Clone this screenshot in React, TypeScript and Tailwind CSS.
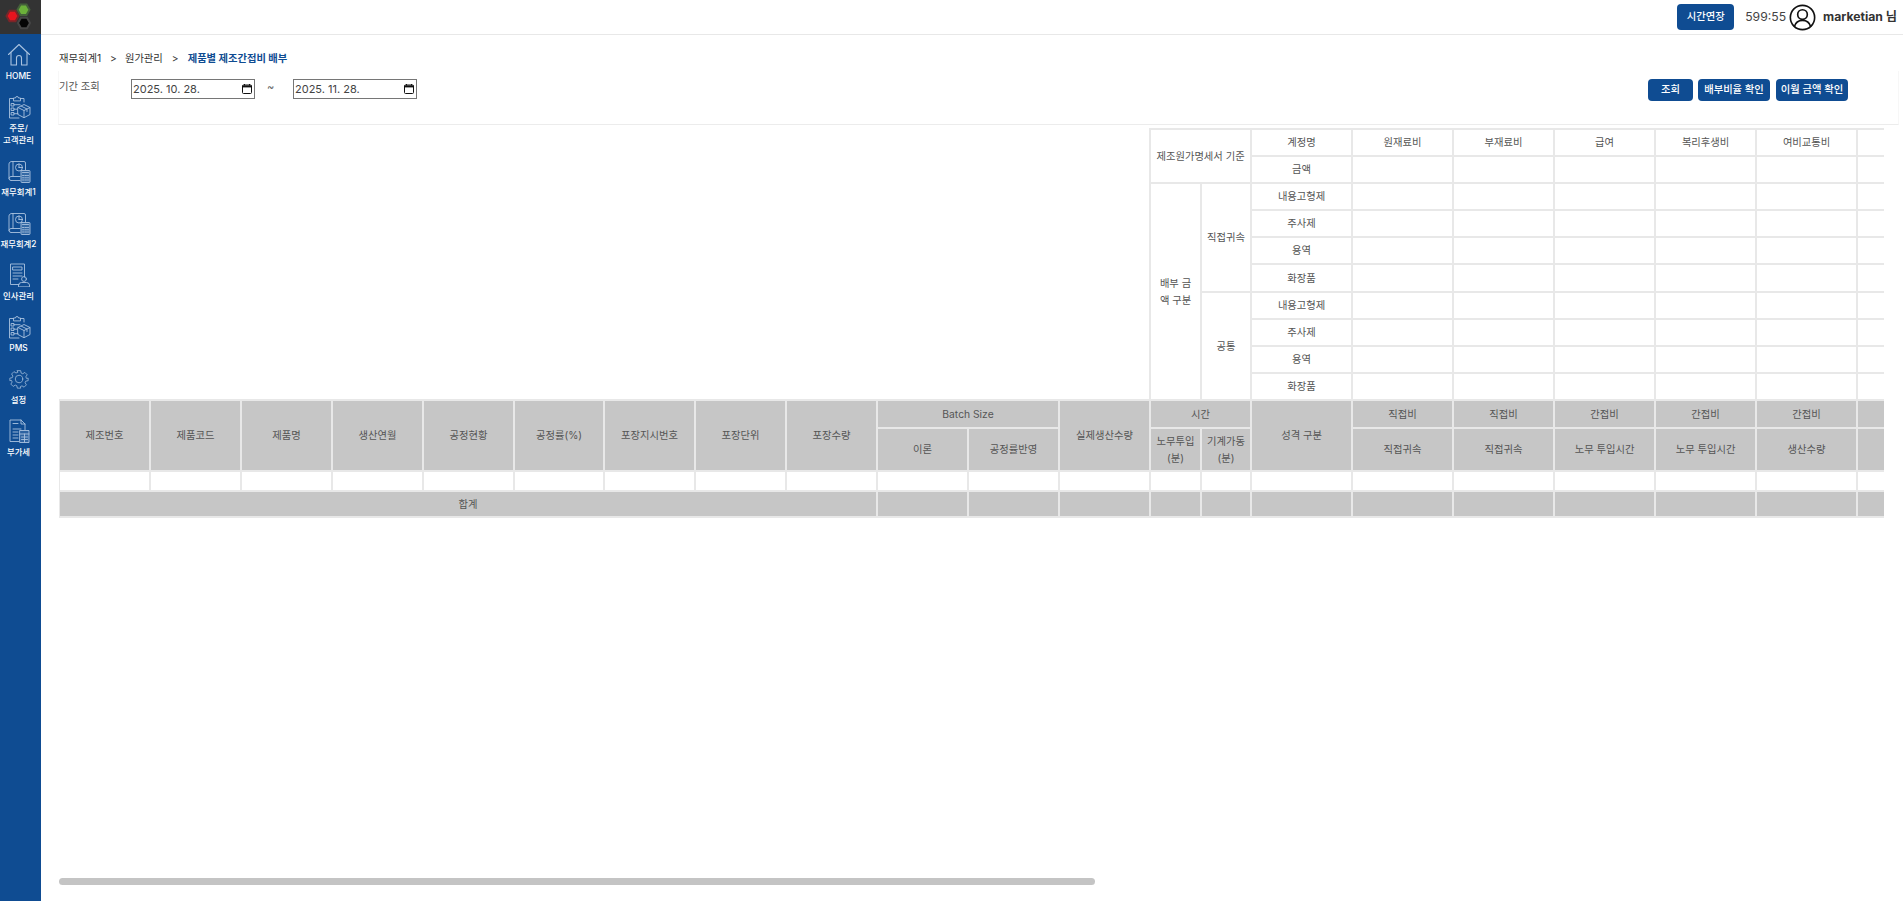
import React from "react";

const FONT = "[font-family:Inter,'Noto_Sans_CJK_KR',sans-serif]";

const Stroke = ({ children, vb = "0 0 24 24", cls = "w-[24px] h-[24px]" }: { children: React.ReactNode; vb?: string; cls?: string }) => (
  <svg viewBox={vb} className={cls} fill="none" stroke="#a9c2df" strokeWidth="0.9" strokeLinejoin="round" strokeLinecap="round">
    {children}
  </svg>
);

const HomeIcon = () => (
  <Stroke>
    <path d="M1.5 11.5 12 1.5l10.5 10" strokeWidth="1.1" />
    <path d="M4 9.5V22h5.5v-7a2.5 2.5 0 0 1 5 0v7H20V9.5" strokeWidth="1.1" />
  </Stroke>
);
const OrderIcon = () => (
  <Stroke>
    <path d="M17 7V3.5h-3.5M6.5 3.5H2.5V23H12" />
    <path d="M6.5 5.5V3h2a1.5 1.5 0 0 1 3 0h2v2.5z" />
    <path d="M4.5 8.5h2.5v2.5H4.5zM4.5 13h2.5v2.5H4.5zM4.5 17.5h2.5V20H4.5zM7 9.7h6M7 14.2h3M7 18.7h4" />
    <path d="m11 12.5 6-3 6 3v7l-6 3.2-6-3.2zM11 12.5l6 3 6-3M17 15.5v7M14 11l6 3v2.5" />
  </Stroke>
);
const BookIcon = () => (
  <Stroke>
    <path d="M5 2.5h12a1.5 1.5 0 0 1 1.5 1.5v7M4 21.5A2 2 0 0 1 2 19.5V5a2.5 2.5 0 0 1 3-2.5M2 19.5a2 2 0 0 1 2-2h9M4 21.5h9" />
    <path d="M6 2.5V17" />
    <circle cx="12" cy="8.5" r="3.5" />
    <path d="M12 8.5V5M12 8.5h3.5" />
    <rect x="14" y="11.5" width="9" height="12" rx="0.8" fill="#a9c2df" fillOpacity="0.25" />
    <path d="M15.5 13.5h6M15.5 16.5h1.5M18 16.5h1.5M20.5 16.5h1M15.5 18.8h1.5M18 18.8h1.5M20.5 18.8h1M15.5 21h1.5M18 21h1.5M20.5 21h1" />
  </Stroke>
);
const PersonDocIcon = () => (
  <Stroke>
    <path d="M12 21.5H3.5V1h14v13" />
    <path d="M6 4h9v3H6zM6 10h9M6 13h9M6 16h5" />
    <circle cx="17" cy="16" r="2.4" />
    <path d="M11.5 23.5v-1.5a3 3 0 0 1 3-2.5h5a3 3 0 0 1 3 2.5v1.5z" />
  </Stroke>
);
const GearIcon = () => (
  <Stroke cls="w-[20px] h-[20px]">
    <circle cx="12" cy="12" r="4.5" />
    <path d="M10 2h4l.6 2.9 1.9.8 2.5-1.6 2.8 2.8-1.6 2.5.8 1.9L23 11v3l-2.9.6-.8 1.9 1.6 2.5-2.8 2.8-2.5-1.6-1.9.8L14 23h-4l-.6-2.9-1.9-.8L5 20.9l-2.8-2.8 1.6-2.5-.8-1.9L1 14v-3l2.9-.6.8-1.9L3.1 6l2.8-2.8 2.5 1.6 1.9-.8z" />
  </Stroke>
);
const TaxIcon = () => (
  <Stroke>
    <path d="M12 22.5H3V1h11l4 4v6" />
    <path d="M14 1v4h4M6 4.5h5M6 10h8M6 13h5M6 16h5M6 19h5" />
    <rect x="13" y="11.5" width="9" height="12" fill="#a9c2df" fillOpacity="0.2" />
    <path d="M13 15h9M14.5 18h6M14.5 20.5h6M17.5 15v8" />
  </Stroke>
);

const navItems: { icon: React.ReactNode; label: React.ReactNode }[] = [
  { icon: <HomeIcon />, label: "HOME" },
  { icon: <OrderIcon />, label: <>주문/<br />고객관리</> },
  { icon: <BookIcon />, label: "재무회계1" },
  { icon: <BookIcon />, label: "재무회계2" },
  { icon: <PersonDocIcon />, label: "인사관리" },
  { icon: <OrderIcon />, label: "PMS" },
  { icon: <GearIcon />, label: "설정" },
  { icon: <TaxIcon />, label: "부가세" },
];

const Logo = () => (
  <svg viewBox="0 0 41 34" className="w-[41px] h-[34px]">
    <polygon points="6.5,16 9.5,10.8 15.5,10.8 18.5,16 15.5,21.2 9.5,21.2" fill="#e8141e" stroke="#7a2528" strokeWidth="2" />
    <polygon points="17.5,9.7 20.5,4.5 26.5,4.5 29.5,9.7 26.5,14.9 20.5,14.9" fill="#6bb03a" stroke="#44603a" strokeWidth="2" />
    <polygon points="18,23 21,17.8 27,17.8 30,23 27,28.2 21,28.2" fill="#050505" stroke="#464646" strokeWidth="2" />
  </svg>
);

const CalendarIcon = () => (
  <svg viewBox="0 0 12 12" className="w-[12px] h-[12px] shrink-0" fill="none" stroke="#111" strokeWidth="1">
    <rect x="1.5" y="2" width="9" height="8.5" rx="1" />
    <path d="M1.5 3.4h9" strokeWidth="2" />
    <path d="M3.5 1v1.5M8.5 1v1.5" />
  </svg>
);

const DateBox = ({ value }: { value: string }) => (
  <div className="flex items-center justify-between w-[124px] h-[20px] border border-[#767676] pl-[1px] pr-[1px] text-[11px] text-[#444]">
    <span>{value}</span>
    <CalendarIcon />
  </div>
);

const Btn = ({ children, w }: { children: React.ReactNode; w: string }) => (
  <button className={`h-[22px] ${w} rounded-[4px] bg-[#0f4c92] text-white text-[10.3px] font-medium`}>{children}</button>
);

const EXTRA = Array.from({ length: 14 });
const BASE_WIDTHS = [91, 91, 91, 91, 91, 90, 91, 91, 91, 91, 91, 91, 51, 50, 101, 101, 101, 101, 101, 101];

const bd = "border-2 border-[#e8e8e8]";
const H = ({ children, ...p }: React.ThHTMLAttributes<HTMLTableCellElement>) => (
  <th {...p} className={`${bd} bg-[#c6c6c6] font-normal text-center align-middle text-[10.3px] leading-[16.5px] text-[#555] px-[2px]`}>
    {children}
  </th>
);
const C = ({ children, ...p }: React.TdHTMLAttributes<HTMLTableCellElement>) => (
  <td {...p} className={`${bd} bg-white text-center align-middle text-[10.3px] leading-[17px] text-[#555] px-[2px]`}>
    {children}
  </td>
);
const blanks = (n: number) => Array.from({ length: n }, (_, i) => <C key={i} />);

const amounts = ["원재료비", "부재료비", "급여", "복리후생비", "여비교통비"];
const types = ["내용고형제", "주사제", "용역", "화장품"];
const groupA = ["직접비", "직접비", "간접비", "간접비", "간접비"];
const groupB = ["직접귀속", "직접귀속", "노무 투입시간", "노무 투입시간", "생산수량"];
const leadHeads = ["제조번호", "제품코드", "제품명", "생산연월", "공정현황", "공정률(%)", "포장지시번호", "포장단위", "포장수량"];

function CostTable() {
  return (
    <table className="table-fixed w-[3212px] -ml-[1px] border-collapse">
      <colgroup>
        {BASE_WIDTHS.map((w, i) => (
          <col key={i} style={{ width: w }} />
        ))}
        {EXTRA.map((_, i) => (
          <col key={i} style={{ width: 101 }} />
        ))}
      </colgroup>
      <tbody>
        <tr className="h-[27px]">
          <td colSpan={12} rowSpan={10} className="border-0 p-0" />
          <C colSpan={2} rowSpan={2}>제조원가명세서 기준</C>
          <C>계정명</C>
          {amounts.map((a) => (
            <C key={a}>{a}</C>
          ))}
          {blanks(14)}
        </tr>
        <tr className="h-[27px]">
          <C>금액</C>
          {blanks(19)}
        </tr>
        {["직접귀속", "공통"].map((g, gi) =>
          types.map((t, ti) => (
            <tr key={g + t} className={gi === 0 && ti === 3 ? "h-[28px]" : "h-[27px]"}>
              {gi === 0 && ti === 0 && (
                <C rowSpan={8}>
                  배부 금<br />액 구분
                </C>
              )}
              {ti === 0 && <C rowSpan={4}>{g}</C>}
              <C>{t}</C>
              {blanks(19)}
            </tr>
          ))
        )}
        <tr className="h-[28px]">
          {leadHeads.map((h) => (
            <H key={h} rowSpan={2}>{h}</H>
          ))}
          <H colSpan={2}>Batch Size</H>
          <H rowSpan={2}>실제생산수량</H>
          <H colSpan={2}>시간</H>
          <H rowSpan={2}>성격 구분</H>
          {groupA.map((a, i) => (
            <H key={i}>{a}</H>
          ))}
          {EXTRA.map((_, i) => (
            <H key={i} />
          ))}
        </tr>
        <tr className="h-[43px]">
          <H>이론</H>
          <H>공정률반영</H>
          <H>노무투입<br />(분)</H>
          <H>기계가동<br />(분)</H>
          {groupB.map((b, i) => (
            <H key={i}>{b}</H>
          ))}
          {EXTRA.map((_, i) => (
            <H key={i} />
          ))}
        </tr>
        <tr className="h-[20px]">{blanks(34)}</tr>
        <tr className="h-[26px]">
          <H colSpan={9}>합계</H>
          {Array.from({ length: 25 }, (_, i) => (
            <H key={i} />
          ))}
        </tr>
      </tbody>
    </table>
  );
}

export default function App() {
  return (
    <div className={`flex h-screen w-full overflow-hidden bg-white ${FONT}`}>
      <aside className="w-[41px] shrink-0 flex flex-col bg-[#0f4c92]">
        <div className="h-[34px] bg-[#333333]">
          <Logo />
        </div>
        <nav className="flex flex-col items-center gap-[14px] pt-[10px] pr-[4px]">
          {navItems.map((n, i) => (
            <div key={i} className="flex flex-col items-center w-full">
              <div className="h-[22px] flex items-center justify-center">{n.icon}</div>
              <div className="mt-[4px] text-center text-[8.4px] leading-[12px] font-medium text-white whitespace-nowrap">{n.label}</div>
            </div>
          ))}
        </nav>
      </aside>

      <main className="flex-1 min-w-0 flex flex-col">
        <header className="h-[35px] shrink-0 flex items-center justify-end border-b border-[#e8e8e8] pr-[6px]">
          <button className="w-[57px] h-[26px] rounded-[4px] bg-[#0f4c92] text-white text-[10.3px] font-medium">시간연장</button>
          <span className="ml-[11px] text-[12.2px] text-[#444]">599:55</span>
          <svg viewBox="0 0 28 28" className="w-[27px] h-[27px] ml-[3px]" fill="none" stroke="#111" strokeWidth="1.7">
            <circle cx="14" cy="14" r="12.6" />
            <circle cx="14" cy="11" r="5" />
            <path d="M5.5 23.5c1.2-4.2 4.4-6.5 8.5-6.5s7.3 2.3 8.5 6.5" />
          </svg>
          <span className="ml-[7px] text-[12.2px] font-bold text-[#333]">marketian 님</span>
        </header>

        <div className="flex-1 min-h-0 flex flex-col pl-[18px] pr-[4px] pb-[16px]">
          <div className="flex items-center h-[14px] mt-[17px] text-[10.3px] text-[#333]">
            <span>재무회계1</span>
            <span className="ml-[9px]">&gt;</span>
            <span className="ml-[8px]">원가관리</span>
            <span className="ml-[9px]">&gt;</span>
            <span className="ml-[9px] font-bold text-[#0f4c92]">제품별 제조간접비 배부</span>
          </div>

          <section className="h-[54px] mt-[5px] -ml-[1px] flex items-start justify-between border-x border-x-[#f7f7f7] border-b border-b-[#ececec] pr-[50px] pt-[8px]">
            <div className="flex items-start">
              <span className="w-[72px] text-[10.3px] leading-[15px] text-[#555]">기간 조회</span>
              <DateBox value="2025. 10. 28." />
              <span className="w-[38px] pl-[12px] text-[11px] text-[#666]">~</span>
              <DateBox value="2025. 11. 28." />
            </div>
            <div className="flex gap-[5px]">
              <Btn w="w-[45px]">조회</Btn>
              <Btn w="w-[72px]">배부비율 확인</Btn>
              <Btn w="w-[72px] ml-[1px]">이월 금액 확인</Btn>
            </div>
          </section>

          <div className="flex-1 min-h-0 w-[1825px] mt-[3px] overflow-hidden">
            <CostTable />
          </div>
          <div className="h-[7px] w-[1036px] shrink-0 rounded-full bg-[#c4c4c4]" />
        </div>
      </main>
    </div>
  );
}
